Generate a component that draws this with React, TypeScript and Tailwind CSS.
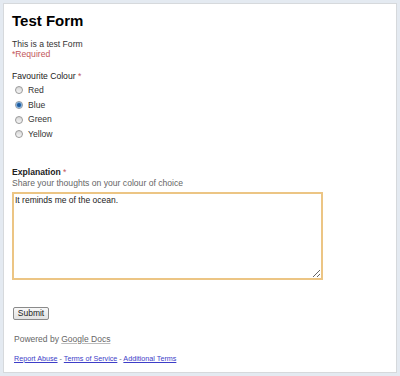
const colours = [
  { label: 'Red', checked: false },
  { label: 'Blue', checked: true },
  { label: 'Green', checked: false },
  { label: 'Yellow', checked: false },
];

function Radio({ checked }: { checked: boolean }) {
  return (
    <span className="flex h-[8px] w-[8px] items-center justify-center rounded-full border border-[#9a9a9a] bg-gradient-to-b from-[#d6d6d6] to-[#f7f7f7]">
      {checked && <span className="h-[4px] w-[4px] rounded-full bg-[#1d5b9e] shadow-[0_0_1px_1px_#6fa3d8]" />}
    </span>
  );
}

export default function App() {
  return (
    <div className="min-h-[376px] w-[400px] bg-[#e4eaf1] p-[3px] font-['Liberation_Sans',Arial,sans-serif]">
      <div className="flex h-[370px] flex-col border border-[#d6d9dc] bg-white px-[8px]">
        <h1 className="mt-[8px] text-[15px] font-bold leading-[18px] text-black">Test Form</h1>

        <p className="mt-[9px] text-[8.6px] leading-[10px] text-[#333]">This is a test Form</p>
        <p className="text-[8.6px] leading-[10px] text-[#c2575a]">*Required</p>

        <div className="mt-[12px] text-[8.6px] leading-[10px] text-[#222]">
          Favourite Colour <span className="text-[#c2575a]">*</span>
        </div>
        <div className="mt-[2px] flex flex-col">
          {colours.map((c) => (
            <div key={c.label} className="flex h-[14.7px] items-center">
              <span className="ml-[3px] mr-[5px]">
                <Radio checked={c.checked} />
              </span>
              <span className="text-[8.6px] text-[#333]">{c.label}</span>
            </div>
          ))}
        </div>

        <div className="mt-[25px] text-[8.6px] font-bold leading-[10px] text-[#222]">
          Explanation <span className="font-normal text-[#c2575a]">*</span>
        </div>
        <p className="mt-[1px] text-[8.6px] leading-[10px] text-[#666]">Share your thoughts on your colour of choice</p>

        <textarea
          readOnly
          defaultValue="It reminds me of the ocean."
          className="mt-[4px] block h-[88px] w-[311px] resize border-2 border-[#ecc584] px-[1px] py-[1px] text-[8.5px] leading-[11px] text-[#222] outline-none"
        />

        <button className="mt-[27px] ml-[1px] block h-[13px] w-[36px] rounded-[2px] border border-[#8a8a8a] bg-gradient-to-b from-[#f8f8f8] to-[#e2e2e2] p-0 text-[8.5px] font-normal leading-[11px] text-[#222]">
          Submit
        </button>

        <p className="mt-[14px] ml-[2px] text-[8.5px] leading-[10px] text-[#666]">
          Powered by <a className="underline decoration-[#bbb]">Google Docs</a>
        </p>

        <p className="mt-[10px] ml-[2px] text-[7.2px] leading-[9px] text-[#3d3dc8]">
          <a className="underline">Report Abuse</a>
          <span className="text-[#666]"> - </span>
          <a className="underline">Terms of Service</a>
          <span className="text-[#666]"> - </span>
          <a className="underline">Additional Terms</a>
        </p>
      </div>
    </div>
  );
}
